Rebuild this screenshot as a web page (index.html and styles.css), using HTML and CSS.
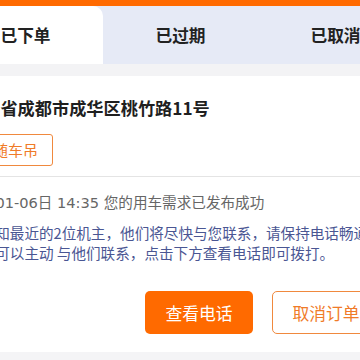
FILE: index.html
```html
<!DOCTYPE html>
<html lang="zh-CN">
<head>
<meta charset="utf-8">
<link rel="stylesheet" href="styles.css">
</head>
<body>
<div class="page">
  <div class="topbar"></div>
  <div class="tabs">
    <div class="tab active">已下单</div>
    <div class="tab">已过期</div>
    <div class="tab">已取消</div>
  </div>
  <div class="gap"></div>
  <div class="card">
    <div class="address">四川省成都市成华区桃竹路11号</div>
    <div class="tags"><span class="tag">随车吊</span></div>
    <div class="divider"></div>
    <div class="date">2024-01-06日 14:35 您的用车需求已发布成功</div>
    <div class="desc">已通知最近的2位机主，他们将尽快与您联系，请保持电话畅通，<br>您也可以主动 与他们联系，点击下方查看电话即可拨打。</div>
    <div class="actions">
      <button class="btn primary">查看电话</button>
      <button class="btn outline">取消订单</button>
    </div>
  </div>
</div>
</body>
</html>
```
FILE: styles.css
```css
html, body {
  margin: 0;
  padding: 0;
}
body {
  background: #f4f4f6;
  overflow: hidden;
  font-family: "Noto Sans CJK SC", "Noto Sans", sans-serif;
}
.page {
  width: 465px;
  margin-left: -52px;
}
.topbar {
  height: 6px;
  background: #ff6a00;
}
.tabs {
  display: flex;
  height: 58px;
  background: #e6eaf6;
}
.tab {
  flex: 1;
  display: flex;
  align-items: center;
  justify-content: center;
  font-size: 16.7px;
  font-weight: 700;
  color: #222;
}
.tab.active {
  background: #fff;
  border-top-right-radius: 10px;
}
.gap {
  height: 12px;
  background: #f3f3f5;
}
.card {
  background: #fff;
  padding: 20px 33px 18px 18px;
}
.address {
  font-size: 17.2px;
  font-weight: 700;
  line-height: 24px;
  color: #1f1f1f;
  white-space: nowrap;
}
.tags {
  margin-top: 14px;
  display: flex;
}
.tag {
  margin-left: 12px;
  height: 30px;
  line-height: 30px;
  padding: 0 14px;
  border: 1px solid #f0893e;
  border-radius: 3px;
  font-size: 15px;
  color: #f07b28;
}
.divider {
  margin: 10px -33px 0 -18px;
  height: 1px;
  background: #e4e4e4;
}
.date {
  margin-top: 16px;
  margin-left: -13px;
  font-family: "DejaVu Sans", "Noto Sans CJK SC", sans-serif;
  font-size: 14.6px;
  line-height: 20px;
  color: #666;
  white-space: nowrap;
}
.desc {
  margin-top: 10px;
  font-size: 14.6px;
  line-height: 20px;
  color: #4a5693;
  white-space: nowrap;
}
.actions {
  margin-top: 28px;
  display: flex;
  justify-content: flex-end;
  gap: 19px;
}
.btn {
  width: 108px;
  height: 43px;
  border-radius: 5px;
  font-family: inherit;
  font-size: 16.8px;
  padding: 0;
  cursor: pointer;
}
.btn.primary {
  background: #ff6a00;
  border: none;
  color: #fff;
}
.btn.outline {
  background: #fff;
  border: 1px solid #f0893e;
  color: #f07b28;
}
```
